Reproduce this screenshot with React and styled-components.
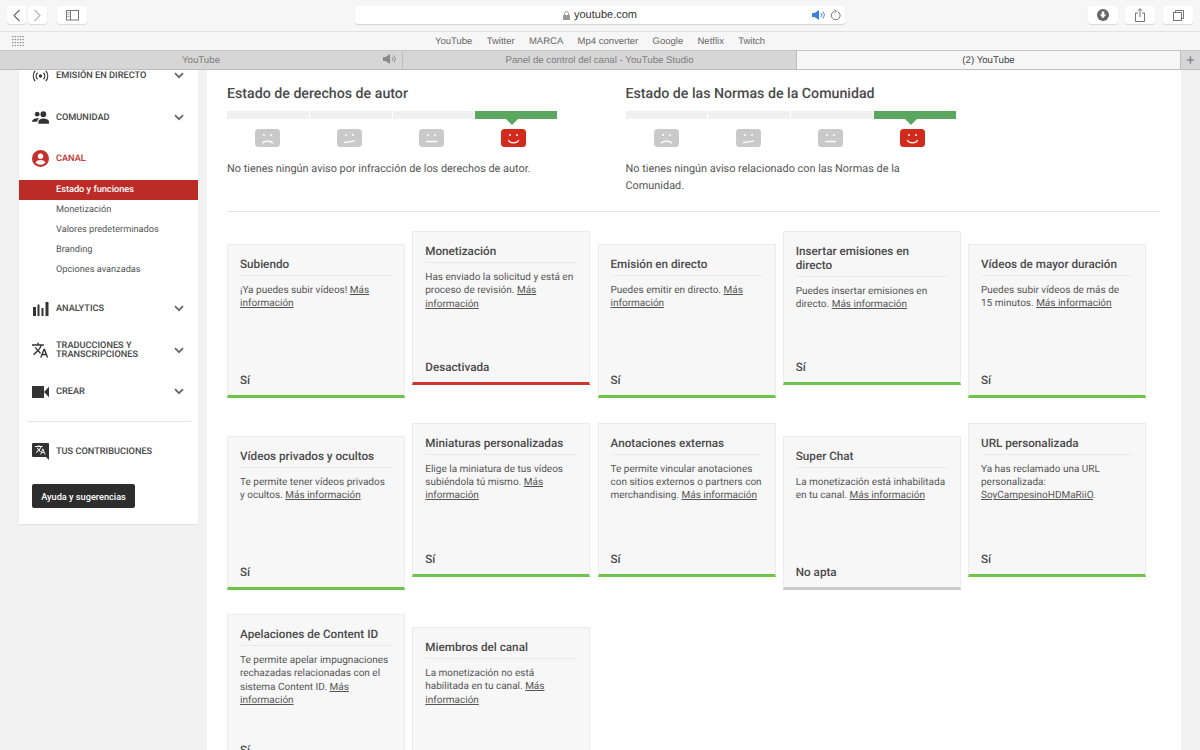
import React from 'react';
import styled, { createGlobalStyle } from 'styled-components';

const GlobalStyle = createGlobalStyle`
  html, body {
    margin: 0;
    padding: 0;
    height: 100%;
    overflow: hidden;
    background: #f1f1f1;
    font-family: Roboto, "Liberation Sans", sans-serif;
    text-rendering: geometricPrecision;
  }
  * { box-sizing: border-box; }
`;

const Page = styled.div`
  width: 1200px;
  height: 750px;
  display: flex;
  flex-direction: column;
  overflow: hidden;
`;

/* safari chrome */
const Toolbar = styled.div`
  height: 32px;
  flex: none;
  display: flex;
  align-items: center;
  padding: 0 7px 1px;
  background: #f6f6f6;
  border-bottom: 1px solid #e2e2e2;
`;

const ToolButton = styled.button`
  width: ${(p) => p.$w || 30}px;
  height: 18px;
  margin-left: ${(p) => p.$ml || 0}px;
  padding: 0;
  border: none;
  border-radius: 3px;
  background: #fff;
  box-shadow: 0 1px 1px rgba(0, 0, 0, 0.12);
  display: flex;
  align-items: center;
  justify-content: center;
  color: #6a6a6a;
`;

const AddressBar = styled.div`
  width: 490px;
  height: 18px;
  margin-left: 268px;
  margin-right: auto;
  border-radius: 3px;
  background: #fff;
  box-shadow: 0 1px 1px rgba(0, 0, 0, 0.14);
  display: grid;
  grid-template-columns: 1fr auto 1fr;
  align-items: center;
`;

const Url = styled.div`
  grid-column: 2;
  display: flex;
  align-items: center;
  gap: 4px;
  font: 11px "Liberation Sans", sans-serif;
  color: #333;
`;

const AddressTools = styled.div`
  grid-column: 3;
  justify-self: end;
  display: flex;
  align-items: center;
  gap: 4px;
  padding-right: 4px;
`;

const Bookmarks = styled.div`
  height: 18px;
  flex: none;
  display: flex;
  align-items: center;
  padding-left: 12px;
  background: #f6f6f6;
`;

const BookmarkLinks = styled.div`
  display: flex;
  gap: 14.3px;
  margin-left: 410px;
  font: 9.5px "Liberation Sans", sans-serif;
  color: #666;
`;

const Tabs = styled.div`
  height: 20px;
  flex: none;
  display: flex;
  border-top: 1px solid #c4c4c4;
  border-bottom: 1px solid #bdbdbd;
  background: #d6d6d6;
`;

const Tab = styled.div`
  width: ${(p) => p.$w}px;
  display: flex;
  align-items: center;
  justify-content: center;
  position: relative;
  font: 9.7px "Liberation Sans", sans-serif;
  color: ${(p) => (p.$active ? '#444' : '#808080')};
  background: ${(p) => (p.$active ? '#f6f6f6' : '#d6d6d6')};
  border-right: 1px solid #bdbdbd;
`;

const TabSound = styled.span`
  position: absolute;
  right: 5px;
  top: 3px;
  display: flex;
`;

const NewTab = styled.div`
  flex: 1;
  display: flex;
  align-items: center;
  justify-content: center;
  color: #777;
  font: 300 15px "Liberation Sans", sans-serif;
`;

/* page content */
const Viewport = styled.div`
  flex: 1;
  min-height: 0;
  display: flex;
  align-items: flex-start;
  overflow: hidden;
  padding-left: 19px;
`;

const Sidebar = styled.nav`
  width: 179px;
  flex: none;
  margin-top: -15px;
  padding-bottom: 16px;
  background: #fff;
  box-shadow: 0 1px 1px rgba(0, 0, 0, 0.06);
`;

const NavRow = styled.div`
  min-height: 41.5px;
  display: flex;
  align-items: center;
  padding: 0 14px 0 13px;
  color: ${(p) => (p.$active ? '#c5302a' : '#333')};
`;

const NavIcon = styled.span`
  width: 17px;
  height: 17px;
  margin-right: 7px;
  flex: none;
  display: flex;
  align-items: center;
  justify-content: center;
  color: ${(p) => (p.$active ? '#c5302a' : '#333')};
`;

const NavLabel = styled.span`
  flex: 1;
  font-size: 9.2px;
  font-weight: 500;
  line-height: 9px;
  color: ${(p) => (p.$active ? '#c5302a' : '#444')};
`;

const SubList = styled.div`
  margin-bottom: 8.5px;
`;

const SubItem = styled.div`
  height: 20px;
  line-height: 20px;
  padding-left: 37px;
  font-size: 9.2px;
  font-weight: ${(p) => (p.$active ? 500 : 400)};
  color: ${(p) => (p.$active ? '#fff' : '#555')};
  background: ${(p) => (p.$active ? '#bb2c28' : 'transparent')};
`;

const NavDivider = styled.div`
  height: 1px;
  margin: 8.5px 7px 9px 8px;
  background: #e6e6e6;
`;

const HelpButton = styled.button`
  display: block;
  width: 103px;
  height: 24px;
  margin: 11.5px 0 0 13px;
  padding: 0;
  border: none;
  border-radius: 2px;
  background: #2d2d2d;
  color: #fff;
  font-family: inherit;
  font-size: 9.2px;
  font-weight: 500;
`;

const Main = styled.main`
  width: 974px;
  height: 700px;
  flex: none;
  margin-left: 9px;
  padding: 14px 20px 0;
  background: #fff;
`;

const StatusRow = styled.section`
  display: grid;
  grid-template-columns: 398.5px 330px;
  padding-bottom: 17px;
  border-bottom: 1px solid #e6e6e6;
  margin-right: 1px;
`;

const StatusBlock = styled.div`
  width: 330px;
`;

const StatusTitle = styled.h2`
  margin: 0 0 8px;
  padding-top: 1px;
  font-size: 14.2px;
  line-height: 18px;
  font-weight: 500;
  color: #4a4a4a;
`;

const Track = styled.div`
  display: flex;
  gap: 1px;
`;

const Segment = styled.div`
  flex: 1;
  height: 8px;
  position: relative;
  background: ${(p) => (p.$on ? '#5aa85f' : '#f0f0f0')};
  ${(p) =>
    p.$on &&
    `&::after {
      content: '';
      position: absolute;
      left: 31px;
      top: 8px;
      border: 6px solid transparent;
      border-bottom: none;
      border-top-color: #5aa85f;
    }`}
`;

const Faces = styled.div`
  display: flex;
  margin-top: 10px;
`;

const FaceSlot = styled.div`
  flex: 1;
  height: 18px;
  display: flex;
  justify-content: center;
  padding-right: ${(p) => (p.$on ? 3 : 1)}px;
`;

const StatusText = styled.p`
  margin: 14px 0 0;
  min-height: 33px;
  font-size: 10.9px;
  line-height: 16.5px;
  color: #555;
`;

const CardGrid = styled.section`
  display: grid;
  grid-template-columns: repeat(5, 178px);
  column-gap: 7.25px;
  row-gap: 24.5px;
  margin-top: 19px;
`;

const Card = styled.article`
  height: 154px;
  margin-top: ${(p) => (p.$raised ? 0 : 13)}px;
  padding: 0 12px 7px;
  display: flex;
  flex-direction: column;
  background: #f7f7f7;
  border: 1px solid #ececec;
  border-bottom: 3px solid ${(p) => p.$accent};
`;

const CardTitle = styled.h3`
  margin: 0;
  padding: 12px 0 4px;
  font-size: 11.7px;
  line-height: 14px;
  font-weight: 500;
  color: #4a4a4a;
  border-bottom: 1px solid #ebebeb;
`;

const CardBody = styled.p`
  flex: 1;
  margin: 0;
  padding-top: 8px;
  font-size: 10px;
  line-height: 13.4px;
  color: #555;
`;

const MoreLink = styled.a`
  color: #555;
  text-decoration: underline;
`;

const CardStatus = styled.div`
  font-size: 11.7px;
  line-height: 16px;
  font-weight: 500;
  color: #4a4a4a;
`;

/* icons */
const Back = () => (
  <svg width="9" height="13" viewBox="0 0 9 13" fill="none" stroke="#666" strokeWidth="1.1">
    <path d="M7.5 1 2 6.5 7.5 12" />
  </svg>
);

const Forward = () => (
  <svg width="9" height="13" viewBox="0 0 9 13" fill="none" stroke="#b5b5b5" strokeWidth="1.1">
    <path d="M1.5 1 7 6.5 1.5 12" />
  </svg>
);

const SidebarToggle = () => (
  <svg width="13" height="11" viewBox="0 0 13 11" fill="none" stroke="#777" strokeWidth="1">
    <rect x="0.5" y="0.5" width="12" height="9.5" />
    <path d="M4.5 0.5v9.5" />
    <path d="M1.5 2.5h2M1.5 4.5h2M1.5 6.5h2" strokeWidth="0.7" />
  </svg>
);

const Lock = () => (
  <svg width="7" height="9" viewBox="0 0 7 9" fill="none">
    <path d="M1.5 4V2.6a2 2 0 0 1 4 0V4" stroke="#999" />
    <rect x="0" y="4" width="7" height="5" rx="0.5" fill="#999" />
  </svg>
);

const Speaker = ({ color = '#3b7fe0', w = 14, h = 10 }) => (
  <svg width={w} height={h} viewBox="0 0 14 10" fill="none">
    <path d="M0 3h2.5L7 0v10L2.5 7H0z" fill={color} />
    <path d="M9 3a2.8 2.8 0 0 1 0 4M11 1.5a5.5 5.5 0 0 1 0 7" stroke={color} strokeWidth="0.9" />
  </svg>
);

const Reload = () => (
  <svg width="11" height="12" viewBox="0 0 11 12" fill="none" stroke="#777" strokeWidth="1">
    <path d="M7.6 2.4a4.4 4.4 0 1 1-3.2-.2" />
    <path d="M4.4 .4 6.4 2.2 4.4 4" />
  </svg>
);

const Download = () => (
  <svg width="12" height="12" viewBox="0 0 12 12">
    <circle cx="6" cy="6" r="6" fill="#666" />
    <path d="M4.7 2.6h2.6v3h1.9L6 9.2 2.8 5.6h1.9z" fill="#fff" />
  </svg>
);

const Share = () => (
  <svg width="10" height="14" viewBox="0 0 10 14" fill="none" stroke="#777" strokeWidth="1">
    <path d="M3 5H.5v8.500h9V5H7" />
    <path d="M5 9V.8M2.8 2.800 5 .6l2.200 2.200" />
  </svg>
);

const Duplicate = () => (
  <svg width="11" height="11" viewBox="0 0 11 11" fill="none" stroke="#777" strokeWidth="1">
    <rect x="0.5" y="2.5" width="8" height="8" />
    <path d="M2.500 2.500V.5h8v8h-2" />
  </svg>
);

const Apps = () => (
  <svg width="13" height="10" viewBox="0 0 13 10" fill="#888">
    {[0, 3, 6, 9].map((y) =>
      [0, 2.6, 5.2, 7.8, 10.4].map((x) => <rect key={`${x}-${y}`} x={x} y={y} width="1.400" height="1.200" />)
    )}
  </svg>
);

const Chevron = () => (
  <svg width="10" height="7" viewBox="0 0 10 7" fill="none" stroke="#666" strokeWidth="1.800">
    <path d="M1 1.200 5 5.200l4-4" />
  </svg>
);

const LiveIcon = () => (
  <svg width="18" height="12" viewBox="0 0 18 12" fill="none" stroke="#333" strokeWidth="1.300">
    <circle cx="9" cy="6" r="1.800" fill="#333" stroke="none" />
    <path d="M5.800 2.600a5 5 0 0 0 0 6.800M12.200 2.600a5 5 0 0 1 0 6.800" />
    <path d="M3.300 .6a8.600 8.600 0 0 0 0 10.800M14.700 .6a8.600 8.600 0 0 1 0 10.800" />
  </svg>
);

const PeopleIcon = () => (
  <svg width="18" height="13" viewBox="0 0 18 13" fill="#333">
    <circle cx="5.500" cy="3" r="2.500" />
    <circle cx="12" cy="3" r="3" />
    <path d="M0 11c0-2.500 3-3.800 5.500-3.800.8 0 1.500.1 2.200.3C6.500 8.300 5.500 9.300 5.500 11z" />
    <path d="M6.800 13v-2c0-2.300 3-3.500 5.200-3.500s6 1.200 6 3.500v2z" />
  </svg>
);

const ChannelIcon = () => (
  <svg width="17" height="17" viewBox="0 0 17 17">
    <circle cx="8.500" cy="8.500" r="8.500" fill="#c5302a" />
    <circle cx="8.500" cy="6.200" r="2.700" fill="#fff" />
    <path d="M3.500 12.400c.7-1.700 3.200-2.500 5-2.500s4.300.8 5 2.500a6.500 6.500 0 0 1-10 0z" fill="#fff" />
  </svg>
);

const BarsIcon = () => (
  <svg width="16" height="14" viewBox="0 0 16 14" fill="#333">
    <rect x="0" y="5" width="3" height="9" />
    <rect x="4.500" y="2.500" width="2" height="11.500" />
    <rect x="8.500" y="6" width="2" height="8" />
    <rect x="12.500" y="0" width="3" height="14" />
  </svg>
);

const TranslatePath =
  'M12.870 15.070l-2.540-2.510.03-.030c1.740-1.940 2.980-4.170 3.710-6.530H17V4h-7V2H8v2H1v1.990h11.170C11.500 7.920 10.440 9.750 9 11.350 8.070 10.320 7.300 9.190 6.690 8h-2c.73 1.630 1.730 3.170 2.980 4.560l-5.090 5.020L4 19l5-5 3.110 3.110.760-2.040zM18.500 10h-2L12 22h2l1.120-3h4.750L21 22h2l-4.500-12zm-2.620 7l1.620-4.330L19.120 17h-3.240z';

const TranslateIcon = () => (
  <svg width="19" height="19" viewBox="1 1 23 23" fill="#333">
    <path d={TranslatePath} />
  </svg>
);

const CameraIcon = () => (
  <svg width="17" height="12" viewBox="0 0 17 12" fill="#333">
    <rect x="0" y="0" width="12" height="12" />
    <path d="M12 6 17 .8v10.400z" />
  </svg>
);

const BubbleIcon = () => (
  <svg width="17" height="17" viewBox="0 0 17 17">
    <path d="M1 0h15a1 1 0 0 1 1 1v16l-3-3H1a1 1 0 0 1-1-1V1a1 1 0 0 1 1-1z" fill="#333" />
    <svg x="3" y="1.500" width="11" height="11" viewBox="1 1 23 23" fill="#fff">
      <path d={TranslatePath} />
    </svg>
  </svg>
);

const mouths = {
  sad: 'M7.500 14c1.500-2.600 8.500-2.600 10 0',
  meh: 'M7.500 13.500c3-.2 7-.8 10-1.600',
  flat: 'M7.500 12.500h10',
  happy: 'M7.500 11.500c2 3.200 8 3.200 10 0',
};

const Face = ({ mood, on }) => (
  <svg width="25" height="18" viewBox="0 0 25 18">
    <rect width="25" height="18" rx="3.500" fill={on ? '#d32a1e' : '#c9c9c9'} />
    <circle cx="9" cy="6" r="1" fill="#fff" />
    <circle cx="16" cy="6" r="1" fill="#fff" />
    <path d={mouths[mood]} fill="none" stroke="#fff" strokeWidth="1.300" strokeLinecap="round" />
  </svg>
);

const moods = ['sad', 'meh', 'flat', 'happy'];

const StatusPanel = ({ title, text }) => (
  <StatusBlock>
    <StatusTitle>{title}</StatusTitle>
    <Track>
      {moods.map((m) => (
        <Segment key={m} $on={m === 'happy'} />
      ))}
    </Track>
    <Faces>
      {moods.map((m) => (
        <FaceSlot key={m} $on={m === 'happy'}>
          <Face mood={m} on={m === 'happy'} />
        </FaceSlot>
      ))}
    </Faces>
    <StatusText>{text}</StatusText>
  </StatusBlock>
);

const GREEN = '#6fc54c';
const RED = '#d0332a';
const GREY = '#c9c9c9';

const cards = [
  { title: 'Subiendo', text: '¡Ya puedes subir vídeos! ', status: 'Sí' },
  { title: 'Monetización', text: 'Has enviado la solicitud y está en proceso de revisión. ', status: 'Desactivada', accent: RED, raised: true },
  { title: 'Emisión en directo', text: 'Puedes emitir en directo. ', status: 'Sí' },
  { title: 'Insertar emisiones en directo', text: 'Puedes insertar emisiones en directo. ', status: 'Sí', raised: true },
  { title: 'Vídeos de mayor duración', text: 'Puedes subir vídeos de más de 15\u00a0minutos. ', status: 'Sí' },
  { title: 'Vídeos privados y ocultos', text: 'Te permite tener vídeos privados y ocultos. ', status: 'Sí' },
  { title: 'Miniaturas personalizadas', text: 'Elige la miniatura de tus vídeos subiéndola tú mismo. ', status: 'Sí', raised: true },
  { title: 'Anotaciones externas', text: 'Te permite vincular anotaciones con sitios externos o partners con merchandising. ', status: 'Sí', raised: true },
  { title: 'Super Chat', text: 'La monetización está inhabilitada en tu canal. ', status: 'No apta', accent: GREY },
  { title: 'URL personalizada', text: 'Ya has reclamado una URL personalizada: ', link: 'SoyCampesinoHDMaRiiO', after: '.', status: 'Sí', raised: true },
  { title: 'Apelaciones de Content ID', text: 'Te permite apelar impugnaciones rechazadas relacionadas con el sistema Content ID. ', status: 'Sí', raised: true },
  { title: 'Miembros del canal', text: 'La monetización no está habilitada en tu canal. ', status: '' },
];

const bookmarks = ['YouTube', 'Twitter', 'MARCA', 'Mp4 converter', 'Google', 'Netflix', 'Twitch'];
const subItems = ['Estado y funciones', 'Monetización', 'Valores predeterminados', 'Branding', 'Opciones avanzadas'];

const App = () => (
  <Page>
    <GlobalStyle />
    <Toolbar>
      <ToolButton $w={19}><Back /></ToolButton>
      <ToolButton $w={19} $ml={2}><Forward /></ToolButton>
      <ToolButton $ml={10}><SidebarToggle /></ToolButton>
      <AddressBar>
        <Url><Lock />youtube.com</Url>
        <AddressTools><Speaker /><Reload /></AddressTools>
      </AddressBar>
      <ToolButton><Download /></ToolButton>
      <ToolButton $ml={7}><Share /></ToolButton>
      <ToolButton $ml={8}><Duplicate /></ToolButton>
    </Toolbar>
    <Bookmarks>
      <Apps />
      <BookmarkLinks>
        {bookmarks.map((b) => <span key={b}>{b}</span>)}
      </BookmarkLinks>
    </Bookmarks>
    <Tabs>
      <Tab $w={403}>YouTube<TabSound><Speaker color="#888" /></TabSound></Tab>
      <Tab $w={394}>Panel de control del canal - YouTube Studio</Tab>
      <Tab $w={384} $active>(2) YouTube</Tab>
      <NewTab>+</NewTab>
    </Tabs>
    <Viewport>
      <Sidebar>
        <NavRow><NavIcon><LiveIcon /></NavIcon><NavLabel>EMISIÓN EN DIRECTO</NavLabel><Chevron /></NavRow>
        <NavRow><NavIcon><PeopleIcon /></NavIcon><NavLabel>COMUNIDAD</NavLabel><Chevron /></NavRow>
        <NavRow $active><NavIcon $active><ChannelIcon /></NavIcon><NavLabel $active>CANAL</NavLabel></NavRow>
        <SubList>
          {subItems.map((s, i) => <SubItem key={s} $active={i === 0}>{s}</SubItem>)}
        </SubList>
        <NavRow><NavIcon><BarsIcon /></NavIcon><NavLabel>ANALYTICS</NavLabel><Chevron /></NavRow>
        <NavRow><NavIcon><TranslateIcon /></NavIcon><NavLabel>TRADUCCIONES Y<br />TRANSCRIPCIONES</NavLabel><Chevron /></NavRow>
        <NavRow><NavIcon><CameraIcon /></NavIcon><NavLabel>CREAR</NavLabel><Chevron /></NavRow>
        <NavDivider />
        <NavRow><NavIcon><BubbleIcon /></NavIcon><NavLabel>TUS CONTRIBUCIONES</NavLabel></NavRow>
        <HelpButton>Ayuda y sugerencias</HelpButton>
      </Sidebar>
      <Main>
        <StatusRow>
          <StatusPanel title="Estado de derechos de autor" text="No tienes ningún aviso por infracción de los derechos de autor." />
          <StatusPanel title="Estado de las Normas de la Comunidad" text="No tienes ningún aviso relacionado con las Normas de la Comunidad." />
        </StatusRow>
        <CardGrid>
          {cards.map((c) => (
            <Card key={c.title} $raised={c.raised} $accent={c.accent || GREEN}>
              <CardTitle>{c.title}</CardTitle>
              <CardBody>
                {c.text}
                <MoreLink>{c.link || 'Más información'}</MoreLink>
                {c.after}
              </CardBody>
              <CardStatus>{c.status}</CardStatus>
            </Card>
          ))}
        </CardGrid>
      </Main>
    </Viewport>
  </Page>
);

export default App;
